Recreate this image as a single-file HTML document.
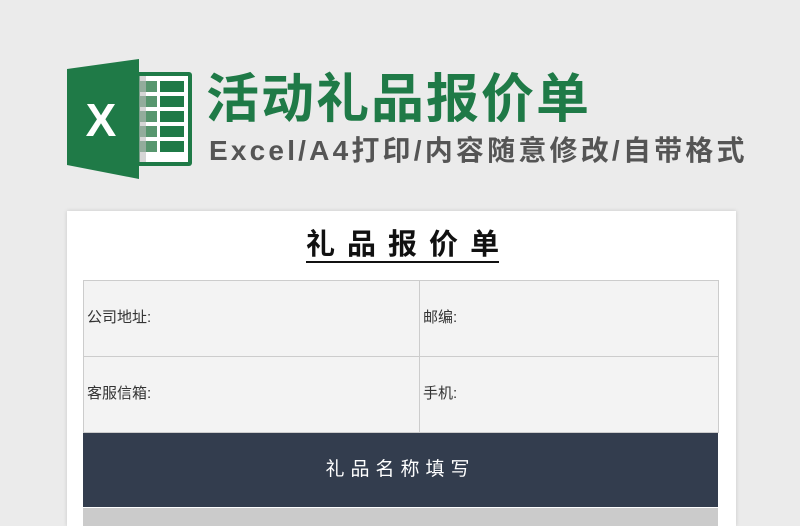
<!DOCTYPE html>
<html><head><meta charset="utf-8"><style>
html,body{margin:0;width:800px;height:526px;overflow:hidden}
body{background:#ebebeb;position:relative;font-family:"Liberation Sans","Noto Sans CJK SC",sans-serif}
.t1{position:absolute;left:206px;top:68px;font-size:53px;font-weight:bold;color:#1f7a47;letter-spacing:2px;line-height:64px;white-space:nowrap}
.t2{position:absolute;left:209px;top:133px;font-size:28px;font-weight:bold;color:#555;line-height:36px;white-space:nowrap;letter-spacing:3.2px}
.card{position:absolute;left:67px;top:211px;width:669px;height:315px;background:#fff;box-shadow:0 0 4px rgba(0,0,0,.15)}
.h{position:absolute;left:239px;top:14px;font-size:29px;font-weight:bold;color:#111;line-height:40px;white-space:nowrap;border-bottom:2px solid #111;height:36px}
.h i{font-style:normal;margin-right:12px}.h i:last-child{margin-right:0}
.cell{position:absolute;background:#f3f3f3;border:1px solid #ccc;font-size:15px;color:#333;box-sizing:border-box;padding-left:3px;line-height:74px}
.dark{position:absolute;left:16px;top:222px;width:635px;height:74px;background:#333d4e;color:#fff;text-align:center;line-height:74px;font-size:19px;letter-spacing:6px}
.gray{position:absolute;left:16px;top:297px;width:635px;height:40px;background:#cbcbcb}
</style></head><body>
<svg style="position:absolute;left:60px;top:55px" width="140" height="130">
<rect x="76" y="17" width="56" height="94" rx="3" fill="#1f7a47"/>
<rect x="80" y="21" width="48" height="86" fill="#fff"/>
<g fill="#1f7a47">
<rect x="100" y="26" width="24" height="11"/><rect x="100" y="41" width="24" height="11"/><rect x="100" y="56" width="24" height="11"/><rect x="100" y="71" width="24" height="11"/><rect x="100" y="86" width="24" height="11"/>
</g>
<g fill="#2e7d4a" opacity=".8">
<rect x="80" y="26" width="17" height="11"/><rect x="80" y="41" width="17" height="11"/><rect x="80" y="56" width="17" height="11"/><rect x="80" y="71" width="17" height="11"/><rect x="80" y="86" width="17" height="11"/>
</g>
<rect x="78" y="21" width="8" height="86" fill="#bbb" opacity=".6"/>
<polygon points="7,14 79,4 79,124 7,110" fill="#1f7a47"/>
<text x="41" y="81" font-family="Liberation Sans" font-weight="bold" font-size="46" fill="#fff" text-anchor="middle">X</text>
</svg>
<div class="t1">活动礼品报价单</div>
<div class="t2">Excel/A4打印/内容随意修改/自带格式</div>
<div class="card">
<div class="h"><i>礼</i><i>品</i><i>报</i><i>价</i><i>单</i></div>
<div class="cell" style="left:16px;top:69px;width:337px;height:77px">公司地址:</div>
<div class="cell" style="left:352px;top:69px;width:300px;height:77px">邮编:</div>
<div class="cell" style="left:16px;top:145px;width:337px;height:77px">客服信箱:</div>
<div class="cell" style="left:352px;top:145px;width:300px;height:77px">手机:</div>
<div class="dark">礼品名称填写</div>
<div class="gray"></div>
</div>
</body></html>
